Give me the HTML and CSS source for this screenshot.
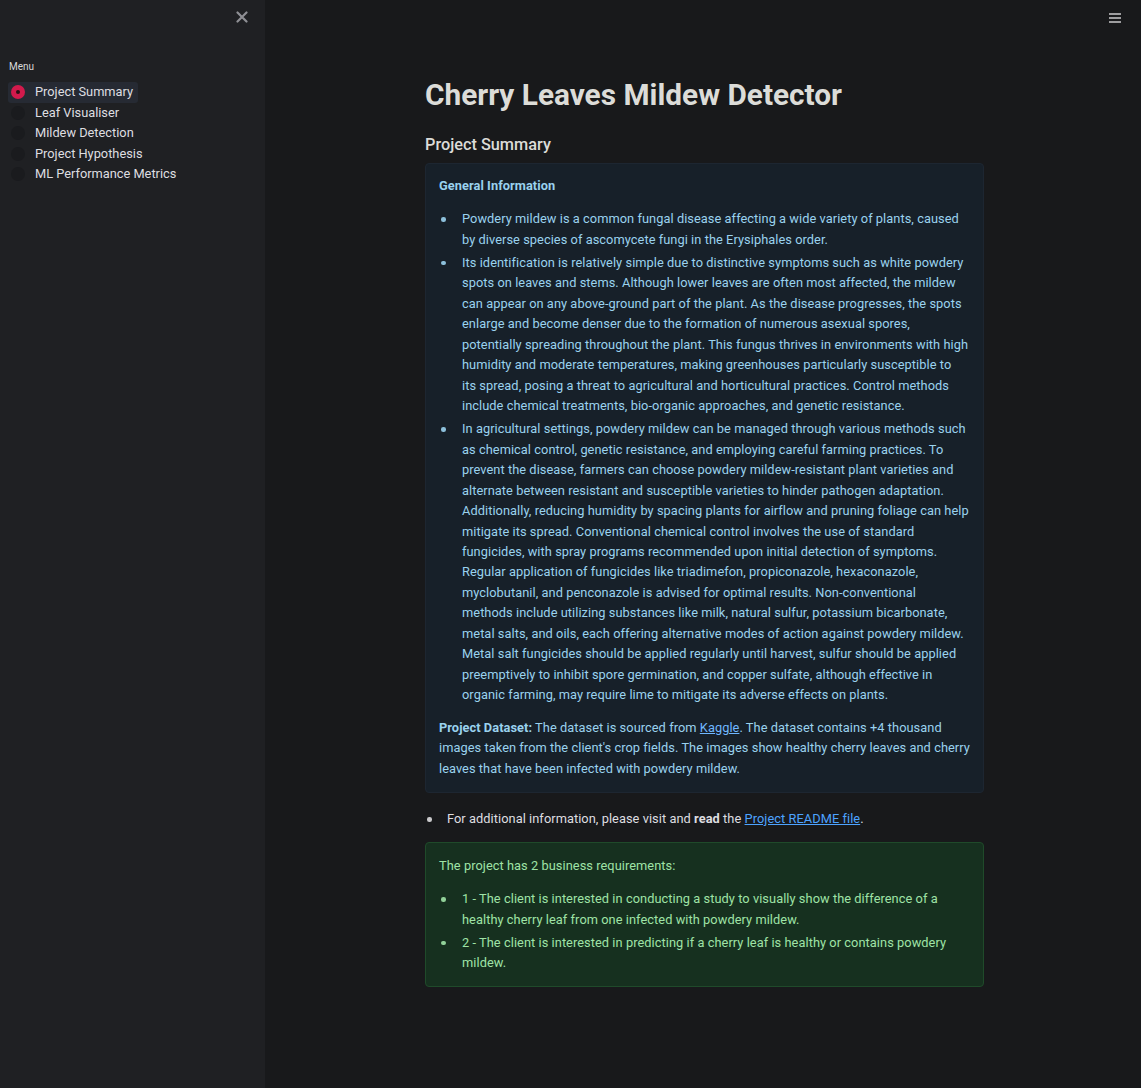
FILE: index.html
```html
<!DOCTYPE html>
<html lang="en">
<head>
<meta charset="utf-8">
<title>Cherry Leaves Mildew Detector</title>
<link rel="stylesheet" href="styles.css">
</head>
<body>
<div class="app">
  <aside class="sidebar">
    <div class="sidebar-top">
      <button class="close-btn" aria-label="Close sidebar">
        <svg width="12" height="12" viewBox="0 0 12 12"><path d="M1.5 1.5 L10.5 10.5 M10.5 1.5 L1.5 10.5" stroke="#8e8f94" stroke-width="2.2" stroke-linecap="round"/></svg>
      </button>
    </div>
    <div class="menu-label">Menu</div>
    <ul class="radio-list">
      <li class="radio-item selected"><span class="radio"><span class="dot"></span></span><span>Project Summary</span></li>
      <li class="radio-item"><span class="radio"></span><span>Leaf Visualiser</span></li>
      <li class="radio-item"><span class="radio"></span><span>Mildew Detection</span></li>
      <li class="radio-item"><span class="radio"></span><span>Project Hypothesis</span></li>
      <li class="radio-item"><span class="radio"></span><span>ML Performance Metrics</span></li>
    </ul>
  </aside>
  <main class="main">
    <div class="topbar">
      <button class="menu-btn" aria-label="Main menu">
        <svg width="12" height="10" viewBox="0 0 12 10"><path d="M0 1 H12 M0 5 H12 M0 9 H12" stroke="#c9c9cc" stroke-width="1.4"/></svg>
      </button>
    </div>
    <div class="content">
      <h1 class="title">Cherry Leaves Mildew Detector</h1>
      <h3 class="subtitle">Project Summary</h3>
      <div class="alert info">
        <p class="alert-head"><strong>General Information</strong></p>
        <ul class="bullets">
          <li>Powdery mildew is a common fungal disease affecting a wide variety of plants, caused by diverse species of ascomycete fungi in the Erysiphales order.</li>
          <li>Its identification is relatively simple due to distinctive symptoms such as white powdery spots on leaves and stems. Although lower leaves are often most affected, the mildew can appear on any above-ground part of the plant. As the disease progresses, the spots enlarge and become denser due to the formation of numerous asexual spores, potentially spreading throughout the plant. This fungus thrives in environments with high humidity and moderate temperatures, making greenhouses particularly susceptible to its&nbsp;spread, posing a threat to agricultural and horticultural practices. Control methods include chemical treatments, bio-organic approaches, and genetic resistance.</li>
          <li>In agricultural settings, powdery mildew can be managed through various methods such as chemical control, genetic resistance, and employing careful farming practices. To prevent the disease, farmers can choose powdery mildew-resistant plant varieties and alternate between resistant and susceptible varieties to hinder pathogen adaptation. Additionally, reducing humidity by spacing plants for airflow and pruning foliage can help mitigate its spread. Conventional chemical control involves the use of standard fungicides, with spray programs recommended upon initial detection of symptoms. Regular application of fungicides like triadimefon, propiconazole, hexaconazole, myclobutanil, and penconazole is advised for optimal results. Non-conventional methods include utilizing substances like milk, natural sulfur, potassium bicarbonate, metal salts, and oils, each offering alternative modes of action against powdery mildew. Metal salt fungicides should be applied regularly until harvest, sulfur should be applied preemptively to inhibit spore germination, and copper sulfate, although effective in organic farming, may require lime to mitigate its adverse effects on plants.</li>
        </ul>
        <p class="alert-foot"><strong>Project Dataset:</strong> The dataset is sourced from <a href="#">Kaggle</a>. The dataset contains +4 thousand images taken from the client's crop fields. The images show healthy cherry leaves and cherry leaves that have been infected with powdery mildew.</p>
      </div>
      <ul class="bullets plain">
        <li>For additional information, please visit and <strong>read</strong> the <a href="#">Project README file</a>.</li>
      </ul>
      <div class="alert success">
        <p class="alert-head">The project has 2 business requirements:</p>
        <ul class="bullets">
          <li>1 - The client is interested in conducting a study to visually show the difference of a healthy cherry leaf from one infected with powdery mildew.</li>
          <li>2 - The client is interested in predicting if a cherry leaf is healthy or contains powdery mildew.</li>
        </ul>
      </div>
    </div>
  </main>
</div>
</body>
</html>
```
FILE: styles.css
```css
* { box-sizing: border-box; }
html, body { margin: 0; padding: 0; height: 100%; }
body {
  background: #18191b;
  color: #dedee0;
  font-family: Roboto, "Noto Sans", "Liberation Sans", sans-serif;
  font-size: 12.8px;
  line-height: 1.6;
}
.app { display: flex; min-height: 1088px; }
.sidebar {
  width: 265px;
  flex: 0 0 265px;
  background: #1f2023;
  padding: 0 8px;
}
.sidebar-top { display: flex; justify-content: flex-end; height: 57px; padding-top: 11px; padding-right: 9px; }
.close-btn, .menu-btn { background: none; border: 0; padding: 0; margin: 0; cursor: pointer; line-height: 0; height: 12px; }
.menu-label { font-size: 10px; line-height: 20px; color: #d8d8da; padding-left: 1px; }
.radio-list { list-style: none; margin: 5px 0 0; padding: 0; }
.radio-item {
  display: flex;
  align-items: center;
  height: 20.5px;
  gap: 10px;
  padding-left: 3px;
  padding-right: 5px;
  font-size: 12.8px;
  color: #dedee0;
  width: fit-content;
  border-radius: 3px;
}
.radio-item.selected { background: #262a33; }
.radio {
  width: 14px; height: 14px; border-radius: 50%;
  background: #1a1b1e;
  display: flex; align-items: center; justify-content: center;
}
.selected .radio { background: #d21a4c; }
.dot { width: 4px; height: 4px; border-radius: 50%; background: #2a1014; }
.main { flex: 1; padding-left: 3px; }
.topbar { display: flex; justify-content: flex-end; height: 45px; padding: 12px 20px 0 0; }
.content { width: 559px; margin: 0 auto; }
.title {
  font-size: 29.8px;
  font-weight: 700;
  color: #dcdcd8;
  margin: 30px 0 0;
  line-height: 40px;
}
.subtitle {
  font-size: 16.3px;
  font-weight: 500;
  color: #dcdcd8;
  margin: 18px 0 0;
  line-height: 24px;
}
.alert {
  border-radius: 4px;
  padding: 12px 13px 13px;
  margin-top: 6px;
  letter-spacing: 0.06px;
}
.alert p { margin: 0; }
.info { background: #172029; color: #9ad2ee; border: 1px solid #1d2631; }
.success { background: #16301f; color: #9fe3a6; border: 1px solid #1f4a2a; margin-top: 12px; padding-top: 13px; padding-bottom: 10px; }
.alert-head { margin-bottom: 13px !important; }
.bullets { margin: 0; padding-left: 23px; list-style: none; }
.bullets li { margin: 0 0 2.5px; position: relative; }
.bullets li::before {
  content: "";
  position: absolute;
  left: -21px;
  top: 8px;
  width: 4.5px;
  height: 4.5px;
  border-radius: 50%;
  background: currentColor;
  opacity: 0.9;
}
.alert-foot { margin-top: 12px !important; }
a { color: #4da3ff; text-decoration: underline; }
.info a { color: #6fb7ff; }
.plain { padding-left: 22px; margin-top: 16px; letter-spacing: 0.06px; }
.plain li { color: #dedee0; }
.plain li::before { left: -20px; }
strong { font-weight: 700; }
```
